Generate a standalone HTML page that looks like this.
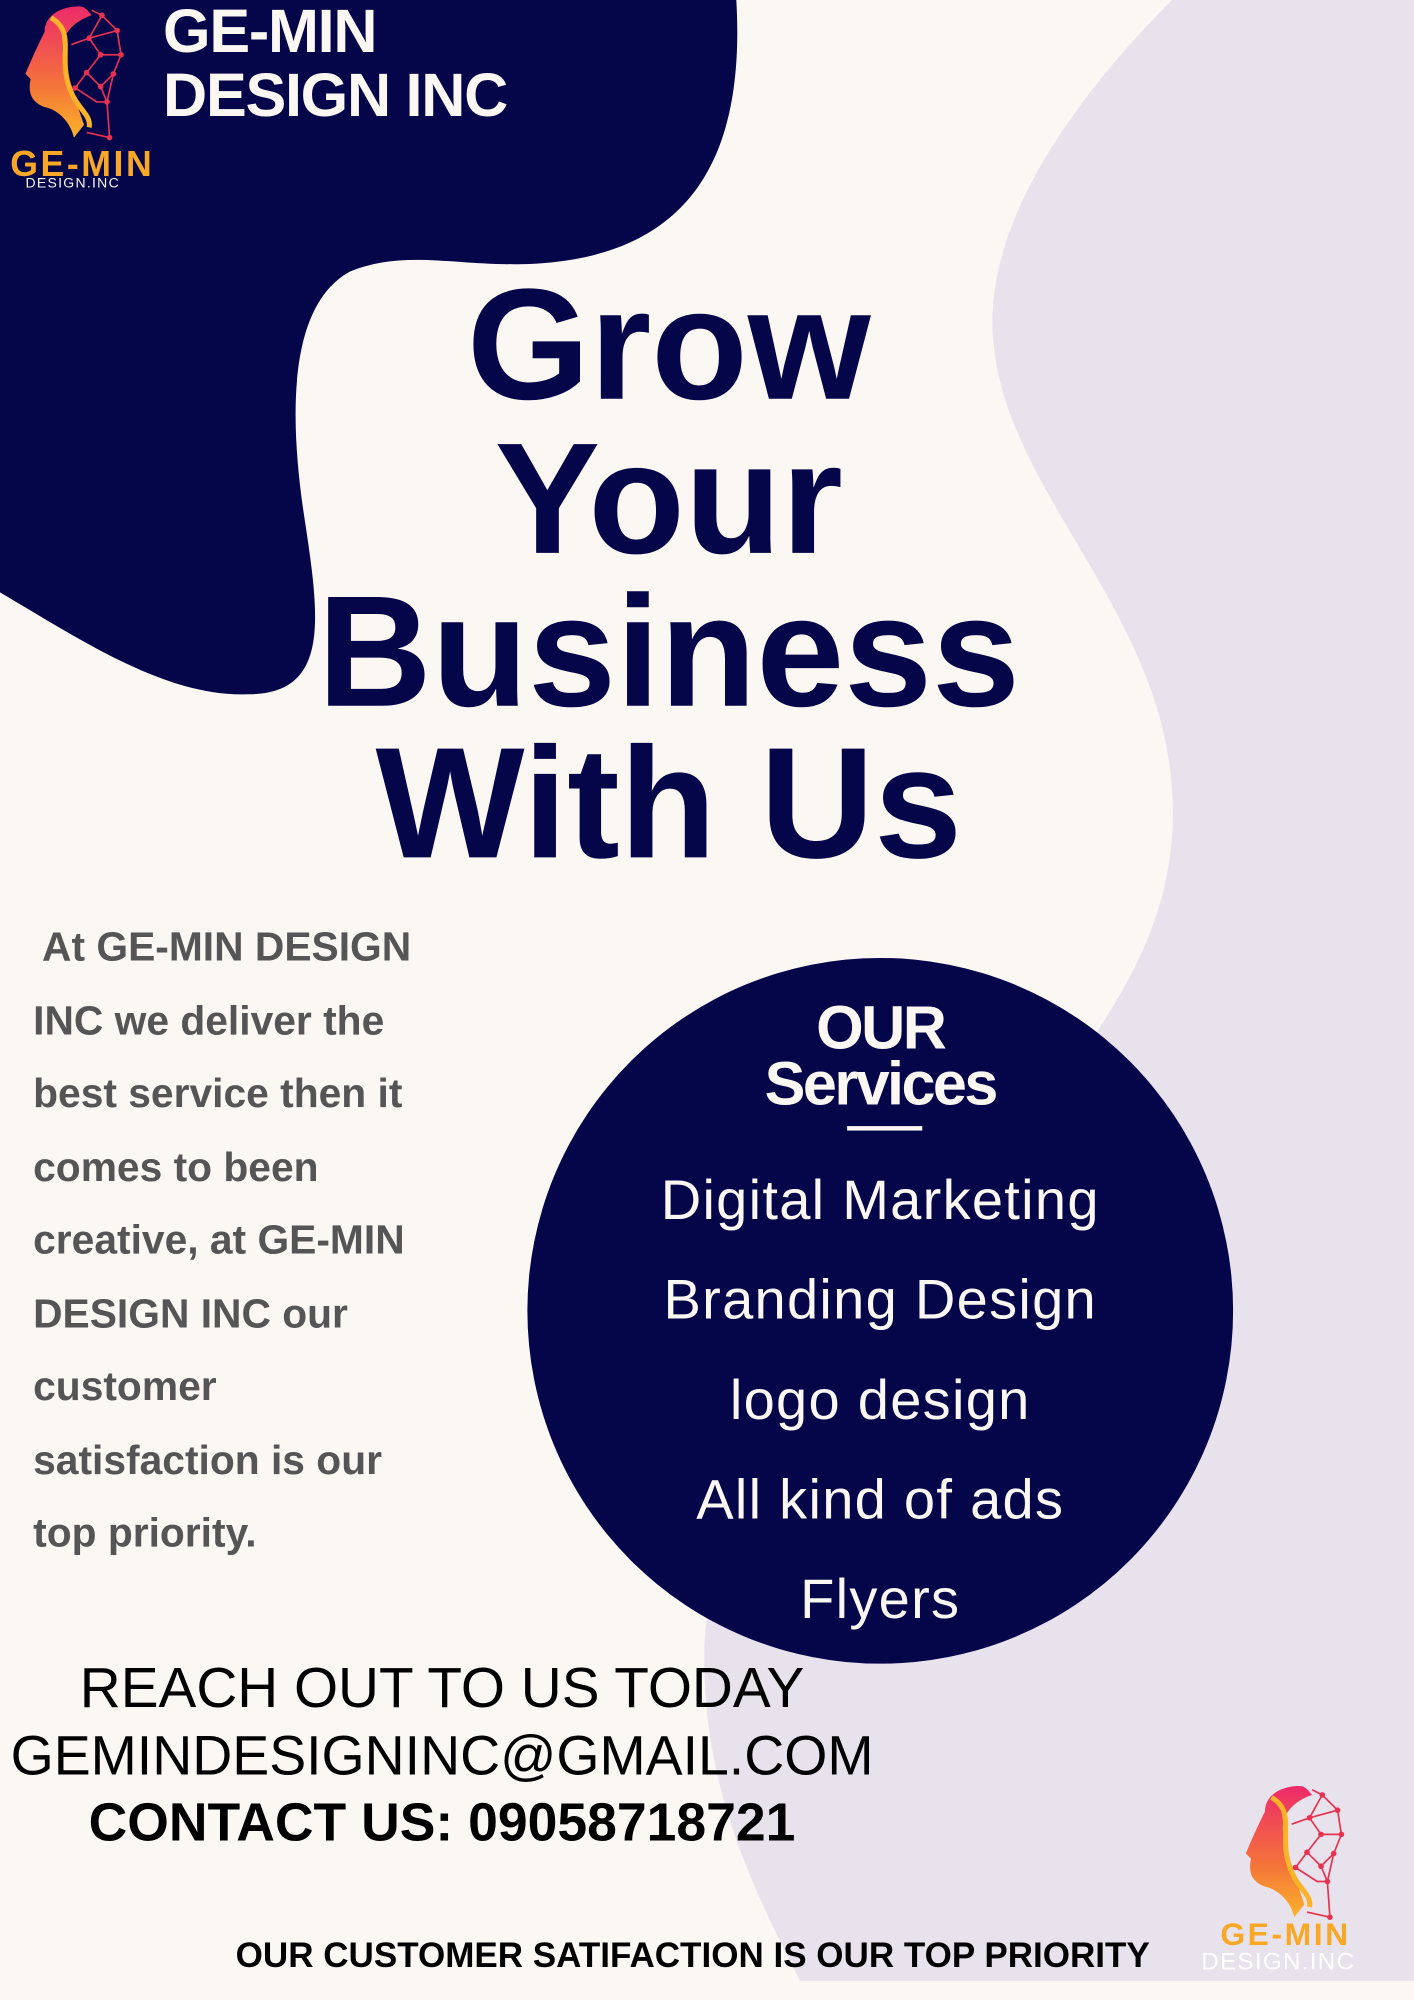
<!DOCTYPE html>
<html><head><meta charset="utf-8"><style>
html,body{margin:0;padding:0;background:#fbf7f3;}
body{width:1414px;height:2000px;overflow:hidden;position:relative;}
#s{position:absolute;left:0;top:0;width:1110px;height:1570px;transform:scale(1.27387);transform-origin:0 0;font-family:"Liberation Sans",sans-serif;}
.a{position:absolute;white-space:nowrap;}
.t{left:0;width:1050px;text-align:center;color:#05054a;font-weight:bold;font-size:124px;letter-spacing:0px;line-height:120px;}
.p{left:26px;color:#555;font-weight:bold;font-size:32px;}
.sv{left:415px;width:552px;text-align:center;color:#fbf7f3;font-size:44px;letter-spacing:1px;}
.r{left:0;width:694px;text-align:center;color:#000;font-size:44.5px;}
</style></head><body><div id="s">
<svg class="a" style="left:0;top:0" width="1110" height="1570" viewBox="0 0 1110 1570">
<path d="M920,0 C840,80 770,180 780,270 C790,380 900,470 918,600 C935,720 870,800 810,880 C700,1030 560,1150 553,1290 C550,1400 590,1480 628,1555 L1110,1555 L1110,0 Z" fill="#e8e2ec"/>
<path d="M0,0 L578,0 C585,120 545,200 420,207 C360,210 320,195 275,213 C225,240 228,330 238,400 C250,480 262,545 195,545 C130,548 60,500 0,465 Z" fill="#05054a"/>
<circle cx="691" cy="1029" r="277" fill="#05054a"/>
<rect x="665" y="884" width="59" height="3.5" fill="#fbf7f3"/>
<defs><linearGradient id="g" x1="0" y1="0" x2="0" y2="1"><stop offset="0" stop-color="#ee2a6a"/><stop offset=".6" stop-color="#f4733a"/><stop offset="1" stop-color="#fbb32a"/></linearGradient></defs>
<g id="lg">
<path d="M62,5 C48,5 35,12 35,25 C30,35 24,48 20,58 L24,62 C22,72 24,80 35,84 C45,86 55,95 58,108 L66,98 C60,80 52,60 50,45 C46,30 55,18 72,12 C68,7 66,5 62,5 Z" fill="url(#g)"/>
<path d="M40,14 C60,25 45,45 55,70 C60,85 72,90 70,100" stroke="#fbb32a" stroke-width="4" fill="none"/>
<g stroke="#e8304f" stroke-width="1.3" fill="none"><path d="M72,8 L80,12 L92,24 L95,43 L89,58 L84,80 L86,108 L68,104 M80,12 L70,30 L92,24 M70,30 L79,43 L95,43 M79,43 L68,57 L59,69 M68,57 L79,68 L89,58 M79,68 L84,80 M59,69 L76,80 L84,80 M56,35 L70,30"/></g>
<g fill="#e8304f"><circle cx="80" cy="12" r="2.2"/><circle cx="92" cy="24" r="2.2"/><circle cx="95" cy="43" r="2.2"/><circle cx="89" cy="58" r="2.2"/><circle cx="70" cy="30" r="2.2"/><circle cx="79" cy="43" r="2.2"/><circle cx="68" cy="57" r="2.2"/><circle cx="79" cy="68" r="2.2"/><circle cx="59" cy="69" r="2.2"/><circle cx="84" cy="80" r="2.2"/><circle cx="86" cy="108" r="2.2"/></g>
</g>
<use href="#lg" transform="translate(958,1397)"/>
</svg>
<div class="a" style="left:8px;top:113px;font-size:28px;font-weight:bold;color:#f9a825;letter-spacing:2px">GE-MIN</div>
<div class="a" style="left:20px;top:138px;font-size:11px;color:#fbf7f3;letter-spacing:1px">DESIGN.INC</div>
<div class="a" style="left:128px;top:1px;font-size:48px;font-weight:bold;color:#fbf7f3;line-height:50px;letter-spacing:-1px">GE-MIN<br>DESIGN INC</div>
<div class="a t" style="top:211px">Grow</div>
<div class="a t" style="top:332px">Your</div>
<div class="a t" style="top:452px">Business</div>
<div class="a t" style="top:571px">With Us</div>
<div class="a p" style="top:725px;left:33px">At GE-MIN DESIGN</div>
<div class="a p" style="top:783px">INC we deliver the</div>
<div class="a p" style="top:840px">best service then it</div>
<div class="a p" style="top:898px">comes to been</div>
<div class="a p" style="top:955px">creative, at GE-MIN</div>
<div class="a p" style="top:1013px">DESIGN INC our</div>
<div class="a p" style="top:1070px">customer</div>
<div class="a p" style="top:1128px">satisfaction is our</div>
<div class="a p" style="top:1185px">top priority.</div>
<div class="a sv" style="top:786px;font-weight:bold;font-size:48px;letter-spacing:-2px;line-height:44px">OUR<br>Services</div>
<div class="a sv" style="top:918px">Digital Marketing</div>
<div class="a sv" style="top:996px">Branding Design</div>
<div class="a sv" style="top:1075px">logo design</div>
<div class="a sv" style="top:1153px">All kind of ads</div>
<div class="a sv" style="top:1231px">Flyers</div>
<div class="a r" style="top:1301px">REACH OUT TO US TODAY</div>
<div class="a r" style="top:1355px;font-size:43.5px">GEMINDESIGNINC@GMAIL.COM</div>
<div class="a r" style="top:1407px;font-weight:bold;font-size:42px">CONTACT US: 09058718721</div>
<div class="a" style="left:185px;top:1519px;font-size:27.5px;font-weight:bold;color:#000">OUR CUSTOMER SATIFACTION IS OUR TOP PRIORITY</div>
<div class="a" style="left:958px;top:1505px;font-size:25px;font-weight:bold;color:#f9a825;letter-spacing:2px">GE-MIN</div>
<div class="a" style="left:943px;top:1530px;font-size:19px;color:#fff;letter-spacing:1px">DESIGN.INC</div>
</div></body></html>
